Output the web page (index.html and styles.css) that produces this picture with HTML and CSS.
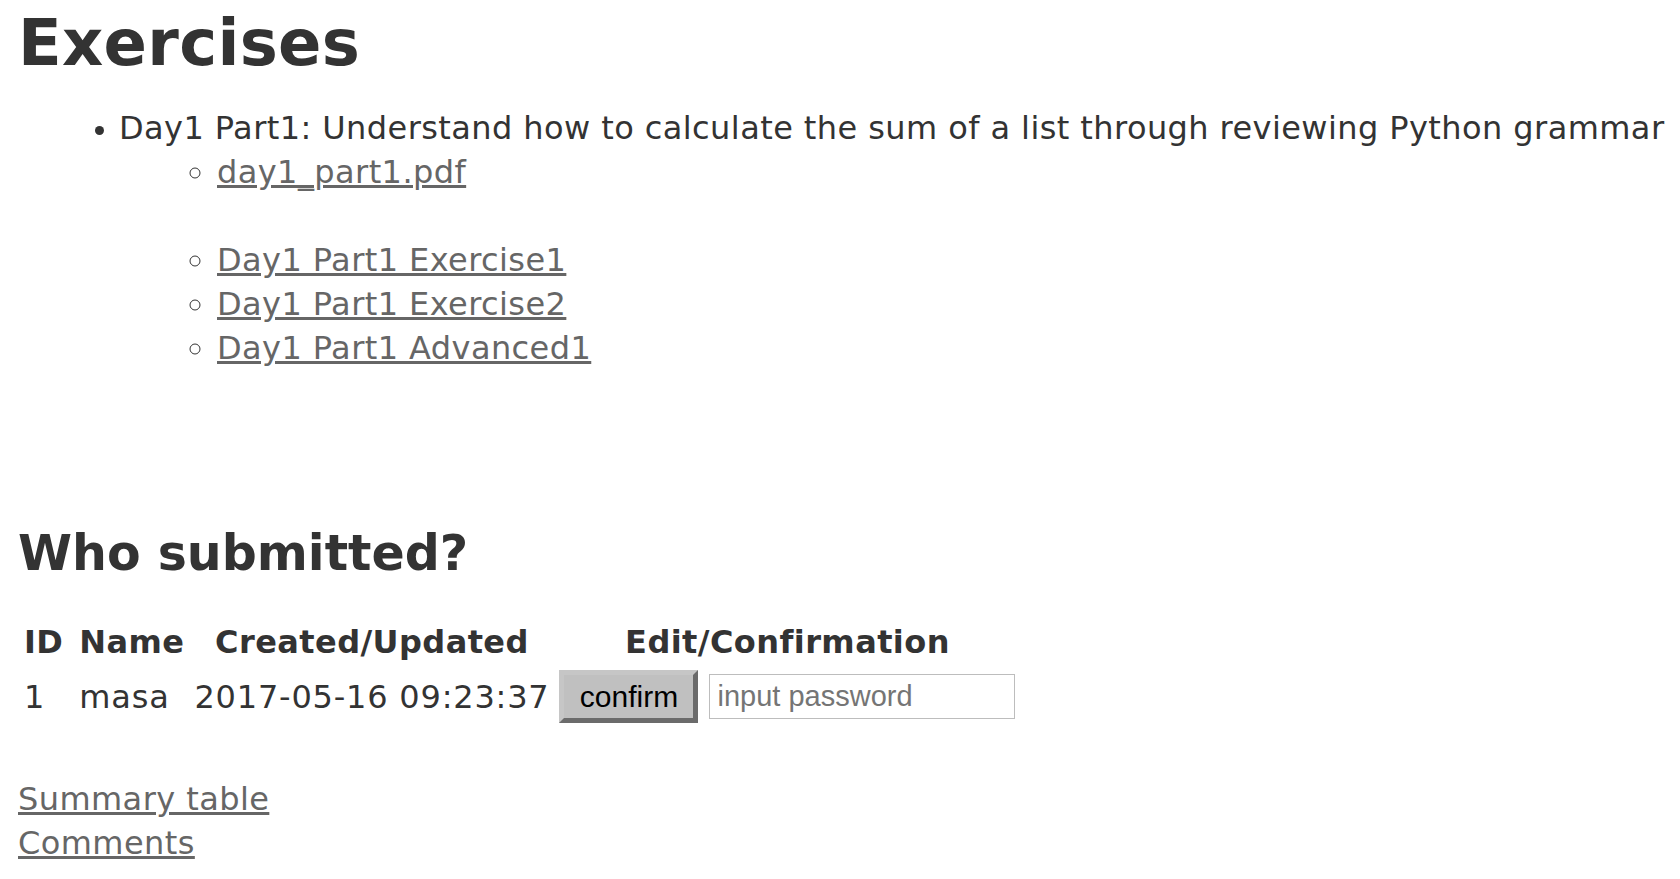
FILE: index.html
```html
<!DOCTYPE html>
<html lang="en">
<head>
<meta charset="utf-8">
<title>Exercises</title>
<link rel="stylesheet" href="styles.css">
</head>
<body>
<main class="page">
  <h1 class="title">Exercises</h1>
  <ul class="parts">
    <li><span class="part-title">Day1 Part1: Understand how to calculate the sum of a list through reviewing Python grammar</span>
      <ul class="sub">
        <li><a href="#">day1_part1.pdf</a></li>
      </ul>
      <ul class="sub sub-gap">
        <li><a href="#">Day1 Part1 Exercise1</a></li>
        <li><a href="#">Day1 Part1 Exercise2</a></li>
        <li><a href="#">Day1 Part1 Advanced1</a></li>
      </ul>
    </li>
  </ul>

  <h2 class="subtitle">Who submitted?</h2>
  <table class="subs">
    <thead>
      <tr><th class="col-id">ID</th><th>Name</th><th>Created/Updated</th><th>Edit/Confirmation</th></tr>
    </thead>
    <tbody>
      <tr>
        <td class="col-id">1</td>
        <td>masa</td>
        <td>2017-05-16 09:23:37</td>
        <td>
          <div class="confirm-cell">
            <button class="btn" type="button">confirm</button>
            <input class="pw" type="password" placeholder="input password">
          </div>
        </td>
      </tr>
    </tbody>
  </table>

  <nav class="links">
    <a href="#">Summary table</a>
    <a href="#">Comments</a>
  </nav>
</main>
</body>
</html>
```

FILE: styles.css
```css
html, body {
  margin: 0;
  padding: 0;
  background: #ffffff;
}

body {
  font-family: "DejaVu Sans", Verdana, sans-serif;
  font-size: 32px;
  letter-spacing: 0.42px;
  line-height: 44px;
  color: #333333;
}

.page {
  padding: 6px 0 0 18px;
}

a {
  color: #666666;
  text-decoration: underline;
}

.title {
  margin: 0;
  font-size: 64px;
  letter-spacing: 0.3px;
  line-height: 74px;
  font-weight: bold;
  color: #333333;
}

.parts {
  margin: 26px 0 0 0;
  padding-left: 101px;
  list-style: disc;
}

.parts > li::marker {
  font-size: 28px;
}

.part-title {
  white-space: nowrap;
}

.sub {
  margin: 0;
  padding-left: 98px;
  list-style: circle;
}

.sub > li::marker {
  letter-spacing: 4px;
}

.sub-gap {
  margin-top: 44px;
}

.subtitle {
  margin: 155px 0 0 0;
  font-size: 49px;
  letter-spacing: 0;
  line-height: 58px;
  font-weight: bold;
  color: #333333;
}

.subs {
  margin-top: 33px;
  border-collapse: separate;
  border-spacing: 2px;
}

.subs th,
.subs td {
  padding: 2px 4px;
  vertical-align: middle;
}

.subs .col-id {
  padding-right: 10px;
}

.subs th {
  font-weight: bold;
  text-align: center;
}

.subs td {
  text-align: left;
  letter-spacing: 0.8px;
}

.confirm-cell {
  display: flex;
  align-items: center;
  gap: 11px;
  letter-spacing: 0;
}

.btn {
  box-sizing: border-box;
  height: 53px;
  width: 139px;
  padding: 0 10px;
  margin: 0;
  background: #c0c0c0;
  border: 5px solid;
  border-color: #c6c6c6 #6b6b6b #6b6b6b #c6c6c6;
  font-family: "Liberation Sans", Arial, sans-serif;
  font-size: 30px;
  color: #000000;
}

.pw {
  box-sizing: border-box;
  width: 306px;
  height: 45px;
  margin: 0;
  padding: 0 7px;
  border: 1px solid #bdbdbd;
  font-family: "Liberation Sans", Arial, sans-serif;
  font-size: 29px;
  color: #333333;
}

.pw::placeholder {
  color: #757575;
}

.links {
  display: flex;
  flex-direction: column;
  align-items: flex-start;
  margin-top: 50px;
}
```
